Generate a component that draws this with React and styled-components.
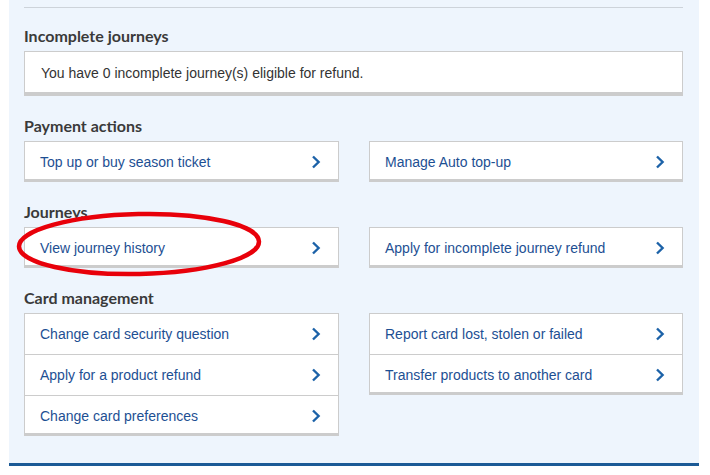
import React from "react";
import styled, { createGlobalStyle } from "styled-components";

const GlobalStyle = createGlobalStyle`
  body {
    margin: 0;
    background: #fff;
  }
`;

const Panel = styled.div`
  position: relative;
  margin-left: 9px;
  width: 690px;
  box-sizing: border-box;
  padding: 7px 16px 27px 15px;
  background: #eef5fd;
  border-bottom: 3px solid #1b5a96;
`;

const Heading = styled.h2`
  margin: 20px 0 5px;
  font-family: "Lato", "Open Sans", sans-serif;
  font-weight: 700;
  font-size: 16px;
  line-height: 20px;
  color: #3a3a3a;
`;

const Divider = styled.hr`
  margin: 0;
  border: 0;
  border-top: 1px solid #cdd3da;

  & + ${Heading} {
    margin-top: 18px;
  }
`;

const InfoBox = styled.div`
  display: flex;
  align-items: center;
  height: 45px;
  box-sizing: border-box;
  padding: 0 16px 3px;
  background: #fff;
  border: 1px solid #cccccc;
  border-bottom: 0;
  box-shadow: inset 0 -4px 0 #cccccc;
  font-family: "Liberation Sans", Arial, sans-serif;
  font-size: 14px;
  color: #333;
`;

const Columns = styled.div`
  display: grid;
  grid-template-columns: 315px 314px;
  column-gap: 30px;
  align-items: start;
`;

const LinkList = styled.div`
  display: flex;
  flex-direction: column;
  background: #fff;
  border-left: 1px solid #cccccc;
  border-right: 1px solid #cccccc;
`;

const LinkRow = styled.a`
  display: flex;
  align-items: center;
  justify-content: space-between;
  height: 41px;
  box-sizing: border-box;
  padding: 0 17px 0 15px;
  border-top: 1px solid #cccccc;
  font-family: "Liberation Sans", Arial, sans-serif;
  font-size: 14px;
  color: #1d4f93;
  text-decoration: none;
  cursor: pointer;

  &:last-child {
    box-shadow: inset 0 -3px 0 #cccccc;
  }
`;

const Chevron = () => (
  <svg width="10" height="14" viewBox="0 0 10 14" aria-hidden="true">
    <path
      d="M2 1.5 L7.6 7 L2 12.5"
      fill="none"
      stroke="#1c62a8"
      strokeWidth="2.4"
    />
  </svg>
);

const Annotation = styled.svg`
  position: absolute;
  left: 5px;
  top: 209px;
  pointer-events: none;
`;

function Section({ title, children }) {
  return (
    <>
      <Heading>{title}</Heading>
      {children}
    </>
  );
}

function Links({ items }) {
  return (
    <LinkList>
      {items.map((label) => (
        <LinkRow key={label}>
          <span>{label}</span>
          <Chevron />
        </LinkRow>
      ))}
    </LinkList>
  );
}

export default function App() {
  return (
    <>
      <GlobalStyle />
      <Panel>
        <Divider />
        <Section title="Incomplete journeys">
          <InfoBox>You have 0 incomplete journey(s) eligible for refund.</InfoBox>
        </Section>
        <Section title="Payment actions">
          <Columns>
            <Links items={["Top up or buy season ticket"]} />
            <Links items={["Manage Auto top-up"]} />
          </Columns>
        </Section>
        <Section title="Journeys">
          <Columns>
            <Links items={["View journey history"]} />
            <Links items={["Apply for incomplete journey refund"]} />
          </Columns>
        </Section>
        <Section title="Card management">
          <Columns>
            <Links
              items={[
                "Change card security question",
                "Apply for a product refund",
                "Change card preferences",
              ]}
            />
            <Links
              items={[
                "Report card lost, stolen or failed",
                "Transfer products to another card",
              ]}
            />
          </Columns>
        </Section>
        <Annotation width="252" height="72" viewBox="0 0 252 72">
          <ellipse
            cx="125"
            cy="35"
            rx="120"
            ry="30"
            fill="none"
            stroke="#e8000a"
            strokeWidth="4.5"
            transform="rotate(-1.2 125 35)"
          />
        </Annotation>
      </Panel>
    </>
  );
}
